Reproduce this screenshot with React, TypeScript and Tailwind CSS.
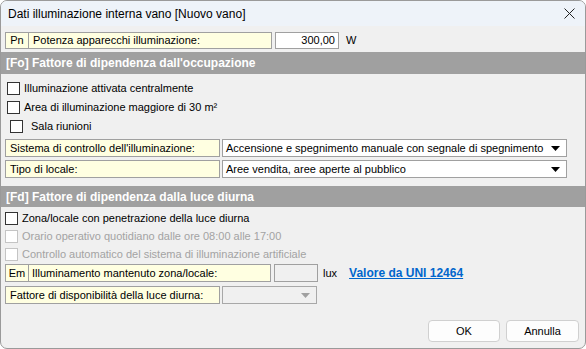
import React from "react";

const font = { fontFamily: '"Liberation Sans", Arial, sans-serif' };

function Check({ label, disabled, indent }: { label: string; disabled?: boolean; indent?: boolean }) {
  return (
    <div className="flex items-center h-[19px]">
      <div
        className={
          "w-[13px] h-[13px] bg-white border " +
          (disabled ? "border-[#c4c4c4]" : "border-[#333333]")
        }
      />
      <span className={(indent ? "ml-[8px] " : "ml-[4px] ") + (disabled ? "text-[#a3a3a3]" : "text-black")}>
        {label}
      </span>
    </div>
  );
}

function Arrow({ gray }: { gray?: boolean }) {
  return (
    <svg width="9" height="5" viewBox="0 0 9 5">
      <path d="M0 0 H9 L4.5 5 Z" fill={gray ? "#a0a0a0" : "#000"} />
    </svg>
  );
}

export default function App() {
  return (
    <div className="w-[586px] h-[349px] bg-white" style={font}>
      <div className="w-[586px] h-[349px] flex flex-col bg-[#f0f0f0] border border-[#9a9a9a] rounded-[7px] overflow-hidden text-[11px] text-black">
        {/* title bar */}
        <div className="h-[25px] shrink-0 bg-[#eef3f9] flex items-center justify-between pl-[7px] pr-[10px]">
          <span className="text-[12px] text-black">Dati illuminazione interna vano [Nuovo vano]</span>
          <svg width="11" height="11" viewBox="0 0 11 11">
            <path d="M0.5 0.5 L10.5 10.5 M10.5 0.5 L0.5 10.5" stroke="#222" strokeWidth="1" />
          </svg>
        </div>

        {/* Pn row */}
        <div className="flex items-center mt-[6px] ml-[4px] h-[17px]">
          <div className="h-[17px] w-[24px] bg-[#ffffe1] border border-[#a0a0a0] flex items-center justify-center">Pn</div>
          <div className="h-[17px] w-[243px] bg-[#ffffe1] border border-l-0 border-[#a0a0a0] flex items-center pl-[4px]">
            Potenza apparecchi illuminazione:
          </div>
          <div className="h-[17px] w-[64px] ml-[3px] bg-white border border-[#a0a0a0] flex items-center justify-end pr-[3px]">
            300,00
          </div>
          <span className="ml-[7px]">W</span>
        </div>

        {/* Fo header */}
        <div className="mt-[3px] h-[22px] shrink-0 bg-[#a0a0a0] flex items-center pl-[5px] text-white font-bold text-[12px]">
          [Fo] Fattore di dipendenza dall'occupazione
        </div>

        <div className="flex flex-col pl-[6px] pt-[5px]">
          <Check label="Illuminazione attivata centralmente" />
          <Check label="Area di illuminazione maggiore di 30 m²" />
          <div className="pl-[3px]">
            <Check label="Sala riunioni" indent />
          </div>
        </div>

        <div className="flex flex-col gap-[3px] mt-[3px] ml-[4px]">
          <div className="flex h-[18px]">
            <div className="w-[215px] bg-[#ffffe1] border border-[#a0a0a0] flex items-center pl-[4px]">
              Sistema di controllo dell'illuminazione:
            </div>
            <div className="w-[345px] ml-[2px] bg-white border border-[#a0a0a0] flex items-center justify-between pl-[3px] pr-[6px]">
              <span>Accensione e spegnimento manuale con segnale di spegnimento</span>
              <Arrow />
            </div>
          </div>
          <div className="flex h-[18px]">
            <div className="w-[215px] bg-[#ffffe1] border border-[#a0a0a0] flex items-center pl-[4px]">Tipo di locale:</div>
            <div className="w-[345px] ml-[2px] bg-white border border-[#a0a0a0] flex items-center justify-between pl-[3px] pr-[6px]">
              <span>Aree vendita, aree aperte al pubblico</span>
              <Arrow />
            </div>
          </div>
        </div>

        {/* Fd header */}
        <div className="mt-[8px] h-[21px] shrink-0 bg-[#a0a0a0] flex items-center pl-[5px] text-white font-bold text-[12px]">
          [Fd] Fattore di dipendenza dalla luce diurna
        </div>

        <div className="flex flex-col pl-[4px] pt-[2px]">
          <div className="h-[19px] flex items-center">
            <Check label="Zona/locale con penetrazione della luce diurna" />
          </div>
          <div className="-mt-[1px]">
            <Check label="Orario operativo quotidiano dalle ore 08:00 alle 17:00" disabled />
          </div>
          <div className="-mt-[1px]">
            <Check label="Controllo automatico del sistema di illuminazione artificiale" disabled />
          </div>
        </div>

        <div className="flex flex-col gap-[4px] ml-[4px]">
          <div className="flex items-center h-[18px]">
            <div className="h-[18px] w-[24px] bg-[#ffffe1] border border-[#a0a0a0] flex items-center justify-center">Em</div>
            <div className="h-[18px] w-[242px] bg-[#ffffe1] border border-l-0 border-[#a0a0a0] flex items-center pl-[3px]">
              Illuminamento mantenuto zona/locale:
            </div>
            <div className="h-[18px] w-[44px] ml-[3px] bg-[#f0f0f0] border border-[#a0a0a0]" />
            <span className="ml-[5px]">lux</span>
            <span className="ml-[12px] text-[#0066cc] font-bold underline text-[12px]">Valore da UNI 12464</span>
          </div>
          <div className="flex h-[18px]">
            <div className="w-[215px] bg-[#ffffe1] border border-[#a0a0a0] flex items-center pl-[4px]">
              Fattore di disponibilità della luce diurna:
            </div>
            <div className="w-[95px] ml-[2px] bg-[#f0f0f0] border border-[#a8a8a8] flex items-center justify-end pr-[6px]">
              <Arrow gray />
            </div>
          </div>
        </div>

        <div className="flex-1" />
        <div className="flex justify-end gap-[6px] pr-[6px] pb-[6px]">
          <button className="w-[72px] h-[22px] bg-[#fdfdfd] border border-[#d0d0d0] rounded-[4px] text-[11px]">OK</button>
          <button className="w-[73px] h-[22px] bg-[#fdfdfd] border border-[#d0d0d0] rounded-[4px] text-[11px]">Annulla</button>
        </div>
      </div>
    </div>
  );
}
